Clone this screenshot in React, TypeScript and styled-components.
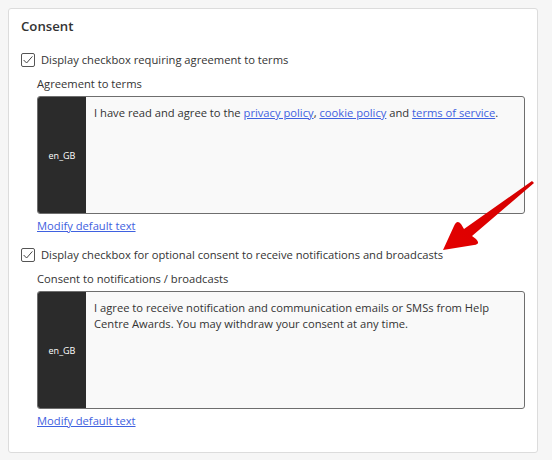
import React from "react";
import styled, { createGlobalStyle } from "styled-components";

const Global = createGlobalStyle`
  html, body { background: #f6f6f6; }
  body { margin: 8px; font-family: "Open Sans", "Liberation Sans", sans-serif; color: #333; }
  * { box-sizing: border-box; }
`;

const Card = styled.section`
  position: relative;
  width: 530px;
  background: #fff;
  border: 1px solid #dcdcdc;
  border-radius: 3px;
  padding: 7px 12px 22px 12px;
`;

const Title = styled.h2`
  margin: 0 0 15px 0;
  font-size: 13.2px;
  line-height: 20px;
  font-weight: 600;
  color: #333;
`;

const CheckRow = styled.label<{ $mt?: number }>`
  display: flex;
  align-items: center;
  gap: 6px;
  margin-top: ${(p) => p.$mt ?? 0}px;
  font-size: 11.2px;
  line-height: 18px;
  color: #333;
`;

const Box = styled.span`
  width: 14px;
  height: 14px;
  border: 1px solid #555;
  border-radius: 2px;
  display: inline-flex;
  align-items: center;
  justify-content: center;
  flex: none;
`;

const Indent = styled.div`
  padding-left: 16px;
  margin-top: 6px;
`;

const FieldLabel = styled.div`
  font-size: 11.2px;
  line-height: 18px;
  margin-bottom: 3px;
`;

const Editor = styled.div`
  display: flex;
  height: 118px;
  border: 1px solid #6e6e6e;
  border-radius: 3px;
  overflow: hidden;
  background: #f9f9f9;
`;

const Lang = styled.div`
  width: 48px;
  flex: none;
  background: #2b2b2b;
  color: #fff;
  font-size: 9px;
  display: flex;
  align-items: center;
  justify-content: center;
`;

const EditorText = styled.div`
  padding: 8px 8px 8px 8px;
  font-size: 11.2px;
  line-height: 16px;
  color: #333;
`;

const Link = styled.a`
  color: #3f61e0;
  text-decoration: underline;
  cursor: pointer;
`;

const ModifyLink = styled(Link)`
  display: block;
  font-size: 11.2px;
  line-height: 18px;
  margin-top: 3px;
`;

const Arrow = styled.svg`
  position: absolute;
  left: 0;
  top: 0;
  width: 530px;
  height: 450px;
  pointer-events: none;
  overflow: visible;
`;

const Check = () => (
  <Box>
    <svg width="12" height="12" viewBox="0 0 12 12">
      <path d="M1.6 6 L4.6 9 L10.4 2.4" fill="none" stroke="#444" strokeWidth="1" />
    </svg>
  </Box>
);

export default function App() {
  return (
    <>
      <Global />
      <Card>
        <Title>Consent</Title>
        <CheckRow>
          <Check />
          Display checkbox requiring agreement to terms
        </CheckRow>
        <Indent>
          <FieldLabel>Agreement to terms</FieldLabel>
          <Editor>
            <Lang>en_GB</Lang>
            <EditorText>
              I have read and agree to the <Link>privacy policy</Link>, <Link>cookie policy</Link> and{" "}
              <Link>terms of service</Link>.
            </EditorText>
          </Editor>
          <ModifyLink>Modify default text</ModifyLink>
        </Indent>
        <CheckRow $mt={11}>
          <Check />
          Display checkbox for optional consent to receive notifications and broadcasts
        </CheckRow>
        <Indent>
          <FieldLabel>Consent to notifications / broadcasts</FieldLabel>
          <Editor>
            <Lang>en_GB</Lang>
            <EditorText>
              I agree to receive notification and communication emails or SMSs from Help Centre Awards. You may
              withdraw your consent at any time.
            </EditorText>
          </Editor>
          <ModifyLink>Modify default text</ModifyLink>
        </Indent>
        <Arrow viewBox="0 0 530 450">
          <defs>
            <linearGradient id="ag" x1="0" y1="1" x2="1" y2="0">
              <stop offset="0" stopColor="#e30000" />
              <stop offset="1" stopColor="#d40000" />
            </linearGradient>
          </defs>
          <g transform="translate(-9,-9)">
            <path
              d="M443 250 L454 226 Q457 219 461 224 L464 229 L532 181 L534 183 L472 236 L476 239 Q481 244 474 245 Z"
              fill="url(#ag)"
            />
          </g>
        </Arrow>
      </Card>
    </>
  );
}
